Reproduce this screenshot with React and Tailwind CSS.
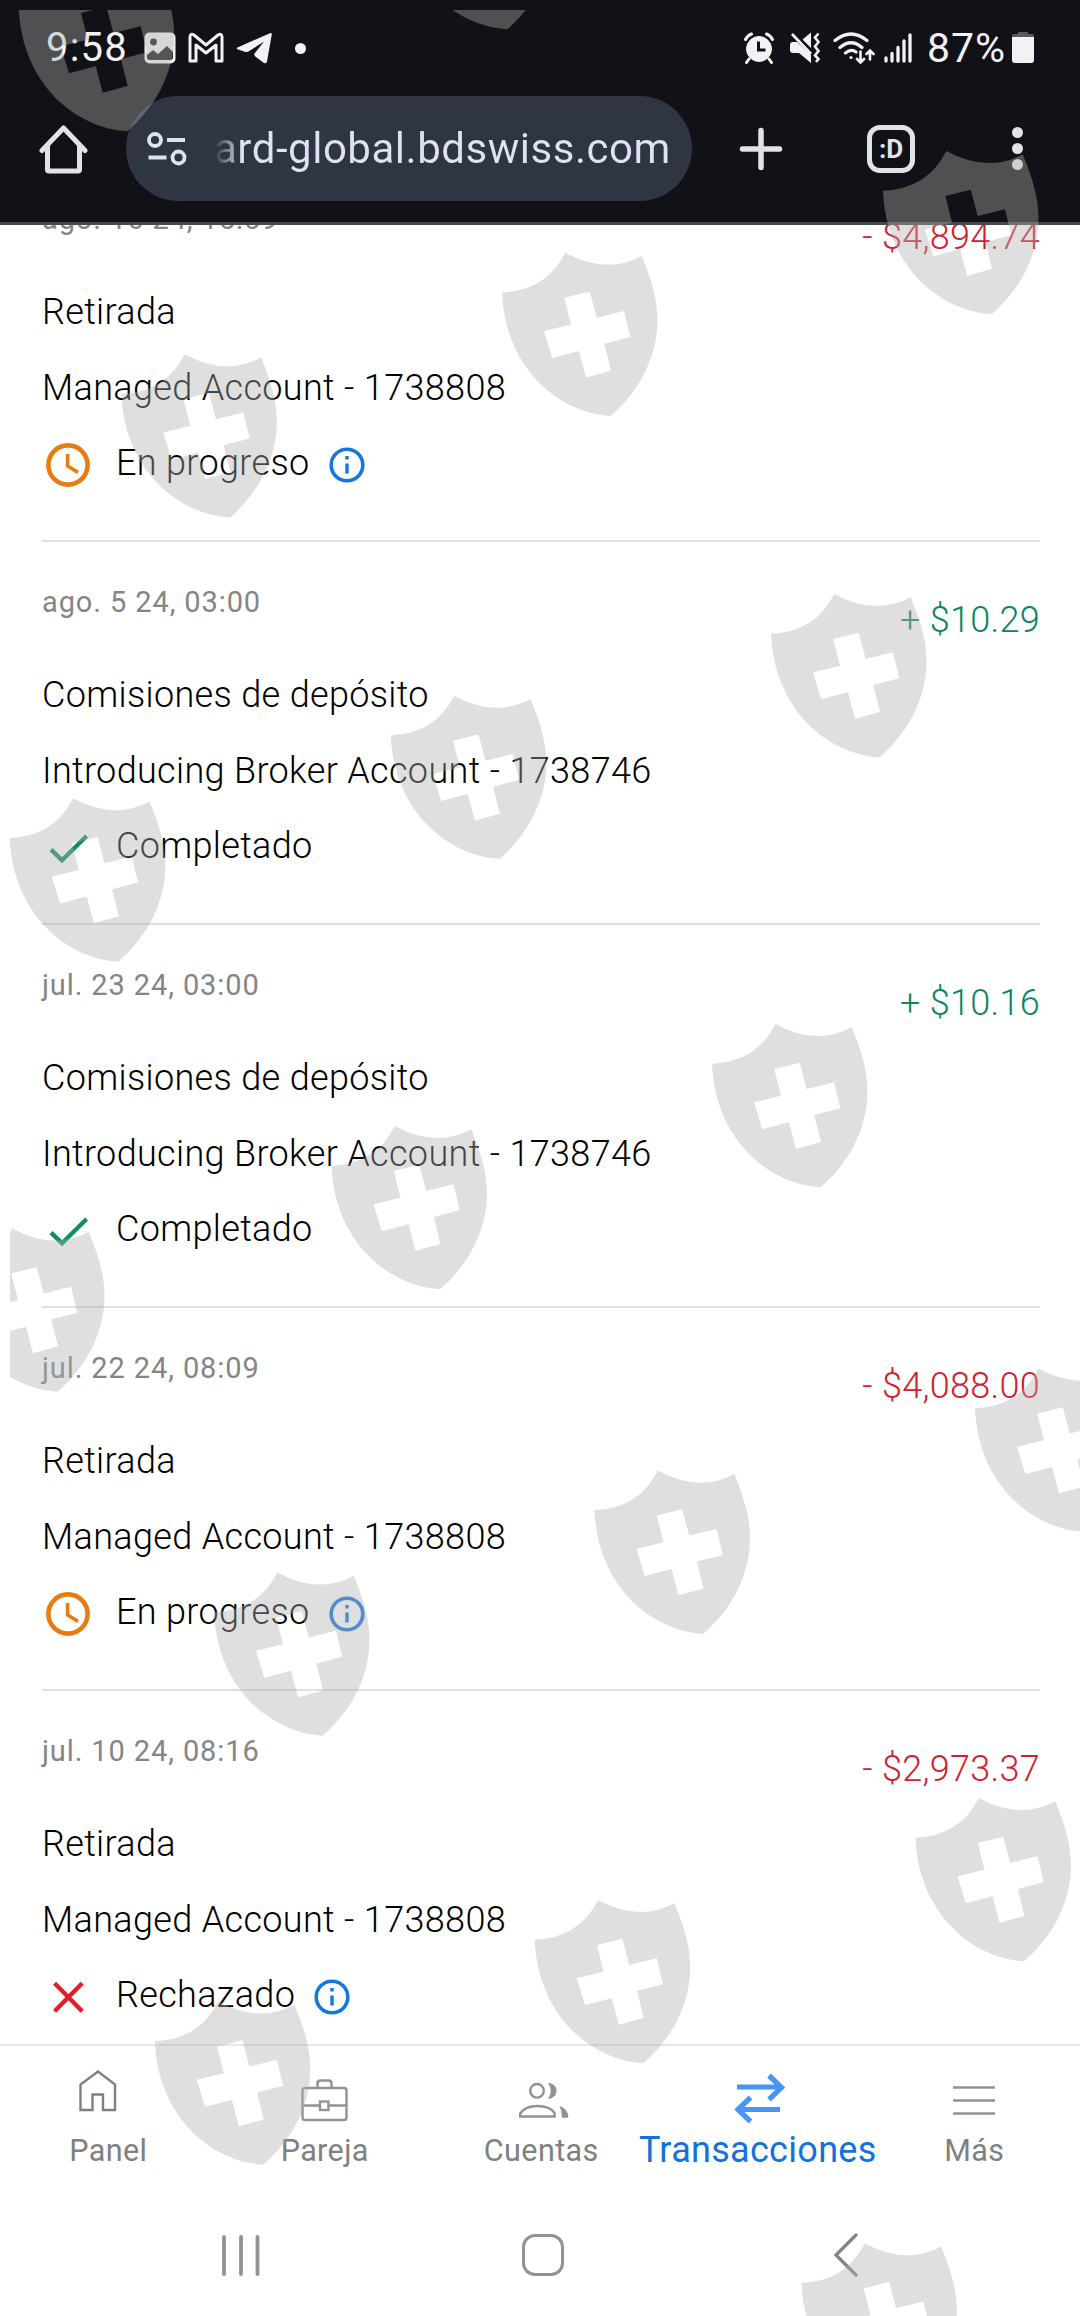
import React from "react";

const ROWS = [
  { date: "ago. 16 24, 15:59", amount: "- $4,894.74", title: "Retirada", account: "Managed Account - 1738808", status: "progress" },
  { date: "ago. 5 24, 03:00", amount: "+ $10.29", title: "Comisiones de depósito", account: "Introducing Broker Account - 1738746", status: "done" },
  { date: "jul. 23 24, 03:00", amount: "+ $10.16", title: "Comisiones de depósito", account: "Introducing Broker Account - 1738746", status: "done" },
  { date: "jul. 22 24, 08:09", amount: "- $4,088.00", title: "Retirada", account: "Managed Account - 1738808", status: "progress" },
  { date: "jul. 10 24, 08:16", amount: "- $2,973.37", title: "Retirada", account: "Managed Account - 1738808", status: "rejected" },
];

const LABELS = { progress: "En progreso", done: "Completado", rejected: "Rechazado" };

const SHIELDS = [
  [18.7, -32], [398.6, -134],
  [883, 151], [502, 252.7], [121.3, 354.3],
  [771, 594], [390.8, 695.7], [9.8, 798.3],
  [712, 1024], [331.5, 1126], [-51, 1228.5],
  [975, 1368.6], [594.5, 1470.6], [214, 1572.5],
  [915.5, 1798], [534.7, 1900], [154.8, 2001.5],
  [801.4, 2243.3],
];

function StatusIcon({ kind }) {
  return (
    <svg className="mt-1 h-[52px] w-[52px] shrink-0" viewBox="0 0 52 52" fill="none">
      {kind === "progress" && (
        <g stroke="#e87c12" strokeWidth="4.6">
          <circle cx="26" cy="26" r="19.6" />
          <path d="M25.6 15v12l10.4 6.4" strokeWidth="3.6" />
        </g>
      )}
      {kind === "done" && <path d="M9 27.6l11 10.6L44.6 14" stroke="#0e9065" strokeWidth="4.4" />}
      {kind === "rejected" && <path d="M12.6 12.2l27.6 28M40.2 12.2l-27.6 28" stroke="#e01f2b" strokeWidth="4.4" />}
    </svg>
  );
}

function InfoIcon() {
  return (
    <svg className="mt-1 ml-[17px] h-10 w-10 shrink-0" viewBox="0 0 40 40" fill="none">
      <circle cx="20" cy="20" r="15.8" stroke="#1576e0" strokeWidth="3.6" />
      <path d="M20 18.4v10.2M20 11v3.6" stroke="#1576e0" strokeWidth="3.4" />
    </svg>
  );
}

function Row({ row }) {
  const tone = row.amount[0] === "+" ? "text-[#0c8560]" : "text-[#d2202e]";
  return (
    <div className="flex h-[383.2px] shrink-0 justify-between border-b-2 border-[#dfdfdf] pt-[38px] font-light">
      <div className="flex flex-col text-[36px] leading-[76px] tracking-[0.34px] text-black">
        <div className="mb-[33px] text-[29px] leading-[44px] font-normal tracking-[0.9px] text-[#858585]">{row.date}</div>
        <div>{row.title}</div>
        <div>{row.account}</div>
        <div className="-mt-px flex items-center">
          <StatusIcon kind={row.status} />
          <span className="ml-[22px]">{LABELS[row.status]}</span>
          {row.status !== "done" && <InfoIcon />}
        </div>
      </div>
      <div className={`mt-0.5 text-[36px] leading-[76px] tracking-[0.3px] ${tone}`}>{row.amount}</div>
    </div>
  );
}

function StatusBar() {
  return (
    <div className="flex h-24 items-center justify-between pr-[46px] pl-[46px] text-[40px] leading-[48px] text-[#f2f2f4]">
      <div className="flex items-center">
        <span className="w-[98px] tracking-[1.2px]">9:58</span>
        <svg className="h-8 w-8" viewBox="0 0 32 32">
          <rect x="0.5" y="0.5" width="31" height="31" rx="5" fill="#f2f2f4" />
          <circle cx="9.5" cy="10" r="3.4" fill="#1b1b20" />
          <path d="M3 23l6-5 5 4 9-8 6 6v5q0 3-3 3H6q-3 0-3-3z" fill="#1b1b20" />
        </svg>
        <svg className="ml-3 h-8 w-9" viewBox="0 0 36 32" fill="none" stroke="#f2f2f4" strokeWidth="3" strokeLinejoin="round">
          <path d="M2 29V5q0-4 4-2l12 10L30 3q4-2 4 2v24h-6V13L18 21 8 13v16z" />
        </svg>
        <svg className="ml-3 h-8 w-9" viewBox="0 0 36 32" fill="#f2f2f4">
          <path d="M1.5 15.4L34 1.2q2-.6 1.800 1.4L31 29.500q-.6 2.500-3 1.400l-8.500-6.200q-2.300-1.900-.4-3.900L28 9.500 12.500 19.600q-1.500.8-3 .3L1.500 17.200q-1.700-.8 0-1.800z" />
        </svg>
        <span className="ml-[23px] size-[11px] rounded-full bg-[#f2f2f4]" />
      </div>
      <div className="flex items-center">
        <svg className="h-8 w-[30px]" viewBox="0 0 30 32" fill="none" stroke="#f2f2f4">
          <circle cx="15" cy="17" r="12.500" fill="#f2f2f4" strokeWidth="1" />
          <path d="M1.500 7.500q2-4 6-5.500M28.500 7.500q-2-4-6-5.500M5 27l-2.500 3.500M25 27l2.500 3.500" strokeWidth="3" strokeLinecap="round" />
          <path d="M14.500 9.500v8.500h7" stroke="#111217" strokeWidth="3" />
        </svg>
        <svg className="ml-4 h-8 w-[30px]" viewBox="0 0 30 32" fill="none" stroke="#f2f2f4">
          <path d="M0 13q0-3 3-3h4l14 13v8L9 21H3q-3 0-3-3zM12.500 7.500L21 .5V16z" fill="#f2f2f4" stroke="none" />
          <path d="M2 2l19 20" strokeWidth="2.800" />
          <path d="M28.500 1.500l-3.500 4 3.500 4.500-3.500 4.500 3.500 4.500-3.500 4.500 3.500 3.500-2.500 3" strokeWidth="2.600" />
        </svg>
        <svg className="ml-[13px] h-8 w-[42px]" viewBox="0 0 42 32" fill="none" stroke="#f2f2f4" strokeWidth="3.200" strokeLinecap="round">
          <path d="M2 8.500q16-13 32 0M7 15.500q11-9.500 22 0M12.500 21q5.500-4.500 10.500-1" />
          <circle cx="18" cy="25.500" r="1.600" fill="#f2f2f4" stroke="none" />
          <path d="M27.500 19.500V30M24 27l3.500 3.500L31 27M37 27.500V19M33.500 22l3.500-3.500 3.500 3.500" strokeWidth="2.600" />
        </svg>
        <svg className="ml-[9px] h-8 w-7" viewBox="0 0 28 32" stroke="#f2f2f4" strokeWidth="3.300" strokeLinecap="round">
          <path d="M2 26v3M8 21.500V29M14 15.500V29M20 9V29M26 3V29" />
        </svg>
        <span className="ml-[15px] text-[41px] tracking-[1px]">87%</span>
        <svg className="ml-[6px] h-8 w-[22px]" viewBox="0 0 22 32">
          <path d="M0 7V4q0-2 2-2h4V0h10v2h4q2 0 2 2v3z" fill="#5a5a5e" />
          <path d="M0 5h22v23q0 3-3 3H3q-3 0-3-3z" fill="#f2f2f4" />
        </svg>
      </div>
    </div>
  );
}

function BrowserBar() {
  return (
    <div className="flex h-[105px] items-center text-[#e3e2e9]">
      <svg className="ml-[39px] h-[50px] w-[49px]" viewBox="0 0 49 50" fill="none" stroke="#e3e2e9" strokeWidth="5" strokeLinejoin="round" strokeLinecap="round">
        <path d="M3 26.500L24.500 4 46 26.500M8.500 22v23.500q0 1.500 1.500 1.500h29q1.500 0 1.500-1.500V22" />
      </svg>
      <div className="ml-[38px] flex h-[105px] w-[566px] items-center rounded-full bg-[#303544] text-[#dfe2f2]">
        <svg className="ml-[21px] h-[34px] w-10" viewBox="0 0 40 34" fill="none" stroke="#dfe2f2" strokeWidth="3.800">
          <circle cx="8" cy="8" r="6" />
          <circle cx="31.500" cy="25.500" r="6" />
          <path d="M20 8h18M1.500 25.500h18" />
        </svg>
        <span className="ml-[27px] bg-linear-to-r from-[#303544] via-[#dfe2f2] via-[6%] to-[#dfe2f2] bg-clip-text text-[42px] leading-[60px] tracking-[0.52px] text-transparent">ard-global.bdswiss.com</span>
      </div>
      <svg className="ml-[47px] h-11 w-[44px]" viewBox="0 0 44 44" stroke="#e3e2e9" strokeWidth="5.500" strokeLinecap="round">
        <path d="M22 3.500v37M3.500 22h37" />
      </svg>
      <div className="ml-[84px] flex h-[48px] w-[48px] items-center justify-center rounded-[13px] border-[5.500px] border-[#e3e2e9] text-[26px] leading-none font-bold">:D</div>
      <div className="ml-[97px] flex flex-col gap-[5px]">
        <span className="size-[11px] rounded-full bg-[#e3e2e9]" />
        <span className="size-[11px] rounded-full bg-[#e3e2e9]" />
        <span className="size-[11px] rounded-full bg-[#e3e2e9]" />
      </div>
    </div>
  );
}

function NavItem({ label, active, children }) {
  return (
    <div className="flex w-[216.5px] shrink-0 flex-col items-center">
      <svg className="mt-5 h-[60px] w-[60px]" viewBox="0 0 60 60" fill="none" stroke="#929292" strokeWidth="2.400">
        {children}
      </svg>
      <span className={active ? "text-[36px] leading-[48px] tracking-[0.3px] text-[#1271dd]" : "mt-[1px] text-[30.500px] leading-[48px] tracking-[0.4px] text-[#808080]"}>{label}</span>
    </div>
  );
}

function BottomNav() {
  return (
    <nav className="flex h-[150px] shrink-0 border-t-2 border-[#e8e8e8] bg-white">
      <NavItem label="Panel">
        <path d="M2.500 44V18.500L20 5.500l17 13V44H25V28.500H14.500V44z" stroke="#808080" />
      </NavItem>
      <NavItem label="Pareja">
        <rect x="7.500" y="22" width="44" height="32" rx="2.500" />
        <path d="M22.500 22v-4.500q0-3 3-3h8q3 0 3 3V22M7.500 39.500h17M34 39.500h17.500" />
        <rect x="25" y="35.500" width="8.500" height="8.500" />
      </NavItem>
      <NavItem label="Cuentas">
        <circle cx="26" cy="24.800" r="6.800" />
        <path d="M9.200 50.500v-3q4.800-7.500 17.300-7.500t17.100 7v3.500z" />
        <path d="M37 16.700q8.500 1 8.500 8T37 33q5.500-8 0-16.300zM48.500 40q8.500 2.500 8.900 11.700h-6.400q0-7-2.500-11.700z" fill="#929292" stroke="none" />
      </NavItem>
      <NavItem label="Transacciones" active>
        <path d="M9 21h45M41 9.500L53.500 21.500 41 33.500M52 43.500H10M22.500 31.500L10 43.500l12.500 12" stroke="#4596f5" strokeWidth="5.200" />
      </NavItem>
      <NavItem label="Más">
        <path d="M9 21.500h42M9 34.500h42M9 47.500h42" />
      </NavItem>
    </nav>
  );
}

function SystemNav() {
  return (
    <div className="flex h-[122px] items-center">
      <svg className="ml-[220px] h-[44px] w-[42px]" viewBox="0 0 42 44" stroke="#929292" strokeWidth="3.800" strokeLinecap="round">
        <path d="M4 4v37M21 4v37M37.500 4v37" />
      </svg>
      <div className="ml-[260px] h-[42px] w-[42px] rounded-[13px] border-[3.500px] border-[#929292]" />
      <svg className="ml-[268px] h-[46px] w-[28px]" viewBox="0 0 28 46" fill="none" stroke="#858585" strokeWidth="3.400" strokeLinecap="round">
        <path d="M24 3L4 23l20 20" />
      </svg>
    </div>
  );
}

function Watermark() {
  return (
    <svg className="pointer-events-none absolute inset-0 h-full w-full" viewBox="0 0 1080 2316">
      <defs>
        <clipPath id="frame"><rect x="10" y="10" width="1070" height="2306" /></clipPath>
      </defs>
      <g clipPath="url(#frame)" fill="#b0b0b0" fillOpacity="0.4" fillRule="evenodd">
        {SHIELDS.map(([x, y]) => (
          <path
            key={`${x},${y}`}
            transform={`translate(${x} ${y})`}
            d="M0 39.700Q44.500 38 63.300 0Q104.300 22.300 139.700 3.300C149.700 27.300 155.500 47.300 155.500 67.300C155.500 107 134.700 140.700 108.700 163.300C56 160 3 115 0 39.700zM62.300 45L87.700 38.700 94.700 65 122 58.300 128.300 84.300 102.300 91 109 118 84 124.700 77 98.300 50.300 105.300 42 78.300 69 71.700z"
          />
        ))}
      </g>
    </svg>
  );
}

export default function App() {
  return (
    <div className="relative flex h-[2316px] w-[1080px] flex-col overflow-hidden bg-white font-[Roboto,sans-serif]">
      <header className="h-[225px] shrink-0 border-b-[3px] border-[#48494d] bg-[#111217]">
        <StatusBar />
        <BrowserBar />
      </header>
      <main className="flex h-[1819px] shrink-0 flex-col overflow-hidden pr-10 pl-[42px]">
        <div className="-mt-[66.500px] flex flex-col">
          {ROWS.map((row) => <Row key={row.date} row={row} />)}
        </div>
      </main>
      <BottomNav />
      <SystemNav />
      <Watermark />
    </div>
  );
}
